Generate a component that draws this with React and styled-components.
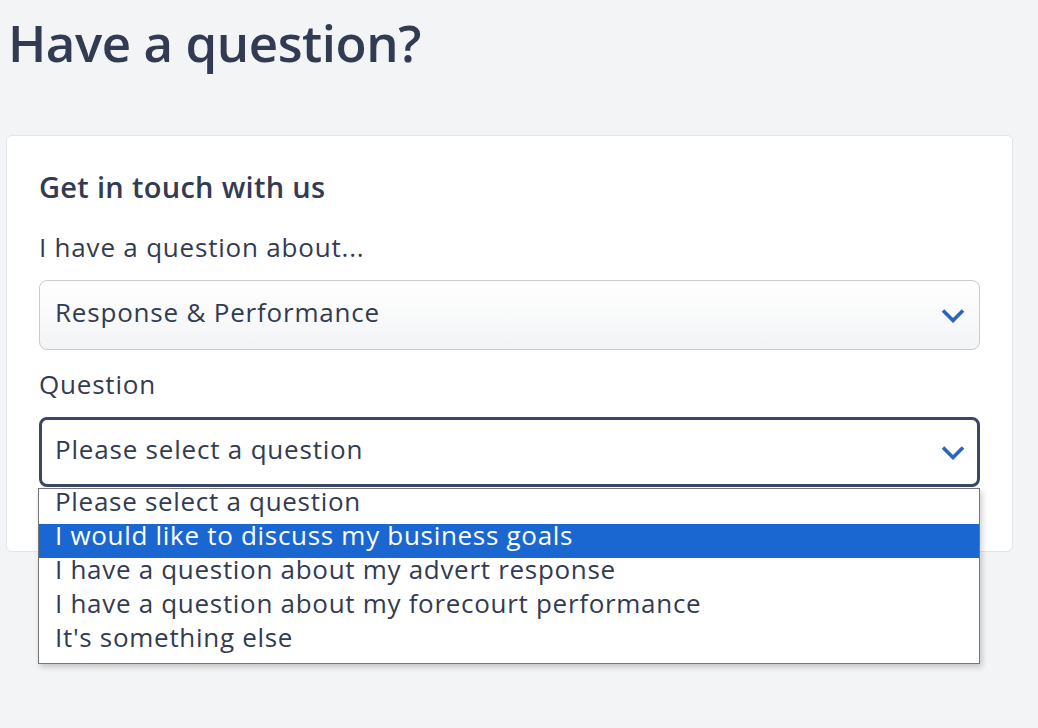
import React from "react";
import styled, { createGlobalStyle } from "styled-components";

const GlobalStyle = createGlobalStyle`
  html, body {
    margin: 0;
    padding: 0;
    background: #f3f4f6;
    font-family: "Open Sans", "Noto Sans", sans-serif;
    color: #323b52;
  }
`;

const questions = [
  "Please select a question",
  "I would like to discuss my business goals",
  "I have a question about my advert response",
  "I have a question about my forecourt performance",
  "It's something else",
];

const Chevron = () => (
  <svg width="24" height="16" viewBox="0 0 24 16" fill="none">
    <path
      d="M2 3.5l10 10 10-10"
      stroke="#2b63bf"
      strokeWidth="3.6"
      strokeLinecap="butt"
      strokeLinejoin="miter"
    />
  </svg>
);

const App = () => {
  const highlighted = 1;

  return (
    <>
      <GlobalStyle />
      <Page>
        <Title>Have a question?</Title>
        <Card>
          <CardTitle>Get in touch with us</CardTitle>
          <Label>I have a question about...</Label>
          <Select>
            <SelectText>Response &amp; Performance</SelectText>
            <Chevron />
          </Select>
          <Label>Question</Label>
          <Field>
            <Select focused>
              <SelectText>{questions[0]}</SelectText>
              <Chevron />
            </Select>
            <Options>
              {questions.map((q, i) => (
                <Option key={q} active={i === highlighted}>
                  {q}
                </Option>
              ))}
            </Options>
          </Field>
        </Card>
      </Page>
    </>
  );
};

const Page = styled.div`
  width: 1038px;
  height: 728px;
  box-sizing: border-box;
  padding: 10px 25px 0 6px;
`;

const Title = styled.h1`
  margin: 0 0 0 2px;
  font-size: 51px;
  line-height: 64px;
  font-weight: 600;
  letter-spacing: -0.45px;
  color: #323b52;
`;

const Card = styled.div`
  margin-top: 61px;
  background: #ffffff;
  border: 1px solid #e3e5e9;
  border-radius: 6px;
  padding: 31px 32px 64px;
`;

const CardTitle = styled.h2`
  margin: 0 0 23px;
  font-size: 29px;
  line-height: 40px;
  font-weight: 600;
  letter-spacing: 0.3px;
`;

const Label = styled.div`
  font-size: 26px;
  line-height: 34px;
  letter-spacing: 0.8px;
  margin-bottom: 16px;
`;

const Field = styled.div`
  position: relative;
`;

const Select = styled.div`
  box-sizing: border-box;
  height: 70px;
  display: flex;
  align-items: center;
  justify-content: space-between;
  border-radius: 8px;
  border: ${(p) => (p.focused ? "3px solid #3c4765" : "1.5px solid #c9cbd0")};
  padding-left: ${(p) => (p.focused ? "13px" : "15px")};
  padding-right: ${(p) => (p.focused ? "12.5px" : "14px")};
  background: ${(p) =>
    p.focused ? "#ffffff" : "linear-gradient(#ffffff, #f3f4f6)"};
  margin-bottom: ${(p) => (p.focused ? "0" : "17px")};
`;

const SelectText = styled.span`
  font-size: 26px;
  line-height: 30px;
  padding-bottom: 6px;
  letter-spacing: 0.8px;
  color: #323b52;
`;

const Options = styled.div`
  position: absolute;
  top: 71px;
  left: -1px;
  width: 942px;
  box-sizing: border-box;
  background: #ffffff;
  border: 1px solid #767676;
  box-shadow: 2px 3px 6px rgba(0, 0, 0, 0.2);
  padding: 1px 0 3px;
`;

const Option = styled.div`
  height: 34px;
  line-height: 23px;
  padding: 0 16px;
  font-size: 26px;
  letter-spacing: 0.7px;
  color: ${(p) => (p.active ? "#ffffff" : "#323b52")};
  background: ${(p) => (p.active ? "#1a67d2" : "transparent")};
  white-space: nowrap;
`;

export default App;
